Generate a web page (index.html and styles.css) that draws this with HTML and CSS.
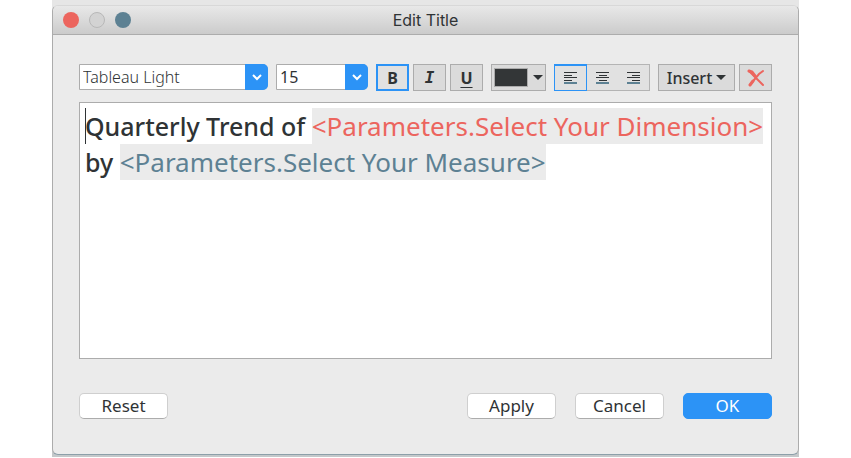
FILE: index.html
```html
<!DOCTYPE html>
<html lang="en">
<head>
  <meta charset="utf-8">
  <title>Edit Title</title>
  <link rel="stylesheet" href="styles.css">
</head>
<body>
  <main class="backdrop">
    <section class="dialog" role="dialog" aria-labelledby="dialog-title">
      <header class="titlebar">
        <div class="lights">
          <button class="light light-close" type="button" aria-label="Close"></button>
          <button class="light light-minimize" type="button" aria-label="Minimize" disabled></button>
          <button class="light light-zoom" type="button" aria-label="Zoom"></button>
        </div>
        <h1 class="title" id="dialog-title">Edit Title</h1>
      </header>
      <form class="content">
        <div class="toolbar" role="toolbar" aria-label="Text formatting">
          <div class="combo combo-font">
            <select class="combo-select" aria-label="Font"><option>Tableau Light</option></select>
            <span class="combo-arrow"><svg width="10" height="8" viewBox="0 0 10 8"><path d="M1 2l4 4 4-4"/></svg></span>
          </div>
          <div class="combo combo-size">
            <select class="combo-select combo-number" aria-label="Font size"><option>15</option></select>
            <span class="combo-arrow"><svg width="10" height="8" viewBox="0 0 10 8"><path d="M1 2l4 4 4-4"/></svg></span>
          </div>
          <div class="group">
            <button class="tool letter active" type="button" aria-label="Bold" aria-pressed="true">B</button>
            <button class="tool letter italic" type="button" aria-label="Italic">I</button>
            <button class="tool letter underline" type="button" aria-label="Underline">U</button>
          </div>
          <button class="tool color" type="button" aria-label="Text color"><span class="swatch"></span><span class="caret"></span></button>
          <div class="segments">
            <button class="segment active" type="button" aria-label="Align left" aria-pressed="true">
              <svg width="14" height="12" viewBox="0 0 14 12"><path d="M0 .5h13M0 3.5h8M0 5.5h13M0 8.5h8"/><path class="base" d="M0 11h13"/></svg>
            </button>
            <button class="segment" type="button" aria-label="Align center">
              <svg width="14" height="12" viewBox="0 0 14 12"><path d="M0 .5h13M3 3.5h8M0 5.5h13M3 8.5h8"/><path class="base" d="M0 11h13"/></svg>
            </button>
            <button class="segment" type="button" aria-label="Align right">
              <svg width="14" height="12" viewBox="0 0 14 12"><path d="M0 .5h13M5 3.5h8M0 5.5h13M5 8.5h8"/><path class="base" d="M0 11h13"/></svg>
            </button>
          </div>
          <div class="group">
            <button class="tool insert" type="button">Insert<span class="caret"></span></button>
            <button class="tool clear" type="button" aria-label="Clear">
              <svg width="18" height="18" viewBox="0 0 18 18"><path d="M2 2l6 6 8 8M16 2l-4 3-5 6-4 5"/><path class="thick" d="M2 2l3 1 3 4M3 16l3-4"/></svg>
            </button>
          </div>
        </div>
        <div class="editor" contenteditable="true" role="textbox" aria-multiline="true" aria-label="Title text">
          <span class="cursor"></span>Quarterly Trend of <span class="field dimension">&lt;Parameters.Select Your Dimension&gt;</span><br>by <span class="field measure">&lt;Parameters.Select Your Measure&gt;</span>
        </div>
        <footer class="actions">
          <button class="action reset" type="reset">Reset</button>
          <button class="action" type="button">Apply</button>
          <button class="action" type="button">Cancel</button>
          <button class="action primary" type="submit">OK</button>
        </footer>
      </form>
    </section>
  </main>
</body>
</html>
```
FILE: styles.css
```css
* { box-sizing: border-box; }

body {
  margin: 0;
  background: #fff;
  color: #2f3335;
  font-family: "Noto Sans", "Open Sans", sans-serif;
}

button, select { font: inherit; color: inherit; }

svg { display: block; fill: none; }

.backdrop {
  display: flex;
  height: 100vh;
  margin: 0 52px;
  padding: 5px 0 2px;
  border-bottom: 1px solid #fff;
  background: linear-gradient(#e6e6e6 50%, #c4c8ca 50%);
}

.dialog {
  display: flex;
  flex: 1;
  flex-direction: column;
  border: 1px solid #acacac;
  border-top-color: #d8d8d8;
  border-bottom-color: #8c9fa9;
  border-radius: 6px;
  background: #ebebeb;
}

.titlebar {
  display: grid;
  grid-template-columns: 1fr auto 1fr;
  align-items: center;
  height: 29px;
  padding: 0 10px;
  border-bottom: 1px solid #acacac;
  border-radius: 5px 5px 0 0;
  background: linear-gradient(#e8e8e8, #d7d7d7 60%, #cbcbcb);
}

.lights { display: flex; gap: 10px; }

.light {
  width: 16px;
  height: 16px;
  padding: 0;
  border: 0;
  border-radius: 50%;
}

.light-close { background: #ec655e; }
.light-minimize { border: 1px solid #b8b8b8; background: #d3d3d3; }
.light-zoom { background: #5d8193; }

.title {
  margin: 0;
  font-family: Inter, sans-serif;
  font-size: 16px;
  font-weight: 400;
  line-height: 20px;
}

.content {
  display: flex;
  flex: 1;
  flex-direction: column;
  padding: 29px 26px 35px;
}

.toolbar { display: flex; gap: 8px; height: 27px; }

.group { display: flex; gap: 4px; }

.combo {
  display: flex;
  position: relative;
  height: 26px;
}

.combo-font { flex: 1; }
.combo-size { width: 92px; }

.combo-select {
  appearance: none;
  width: 100%;
  padding: 0 26px 0 3px;
  border: 1px solid #acacac;
  border-radius: 0 5px 5px 0;
  background: #fff;
  font-size: 16px;
  font-weight: 300;
}

.combo-number { font-weight: 400; }

.combo-arrow {
  display: grid;
  place-items: center;
  position: absolute;
  top: 0;
  right: 0;
  width: 23px;
  height: 26px;
  border-radius: 0 5px 5px 0;
  background: #2c93f6;
  pointer-events: none;
}

.combo-arrow svg { stroke: #fff; stroke-width: 2; }

.tool {
  display: flex;
  align-items: center;
  justify-content: center;
  height: 27px;
  padding: 0;
  border: 1px solid #acacac;
  background: #dbdbdb;
}

.letter {
  width: 33px;
  font-size: 16px;
  font-weight: 700;
}

.tool.active { border: 2px solid #2c93f6; background: #e1e1e1; }
.italic { font-family: "DejaVu Sans Mono", monospace; font-style: italic; }
.underline { text-decoration: underline; text-underline-offset: 3px; }

.color { gap: 5px; width: 55px; }
.swatch { width: 34px; height: 19px; border: 1px solid #acacac; background: #333637; }

.caret {
  border: 5px solid transparent;
  border-top-color: #2f3335;
  border-bottom: 0;
}

.segments {
  display: flex;
  width: 96px;
  border: 1px solid #b4b4b4;
  border-left: 0;
  background: #e1e1e1;
}

.segment {
  display: grid;
  flex: 1;
  place-items: center;
  padding: 0;
  border: 0;
  background: none;
}

.segment.active { margin: -1px 0; border: 1px solid #2c93f6; border-top-width: 2px; }
.segment svg { stroke: #2f3335; }
.segment .base { stroke: #5d8193; stroke-width: 2; }

.insert { gap: 4px; width: 77px; font-size: 16px; font-weight: 500; }
.clear { width: 33px; }
.clear svg { stroke: #ec655e; stroke-width: 2; stroke-linecap: round; }
.clear .thick { stroke-width: 3; }

.editor {
  flex: 1;
  margin-top: 11px;
  padding: 5px;
  border: 1px solid #acacac;
  background: #fff;
  font-size: 25px;
  font-weight: 500;
  line-height: 36px;
  white-space: nowrap;
}

.cursor {
  display: inline-block;
  width: 1px;
  height: 36px;
  margin-right: -1px;
  background: #2f3335;
  vertical-align: top;
}

.field {
  display: inline-block;
  background: #ebebeb;
  font-size: 26px;
  font-weight: 400;
  vertical-align: top;
}

.dimension { color: #ec655e; }
.measure { color: #5d8193; }

.actions { display: flex; gap: 19px; margin-top: 34px; }

.action {
  width: 89px;
  height: 26px;
  padding: 0;
  border: 1px solid #cfcfcf;
  border-bottom-color: #acacac;
  border-radius: 5px;
  background: #fff;
  font-size: 17px;
  line-height: 24px;
}

.reset { margin-right: auto; }
.primary { border-color: #2c93f6; background: #2c93f6; color: #fff; }
```
